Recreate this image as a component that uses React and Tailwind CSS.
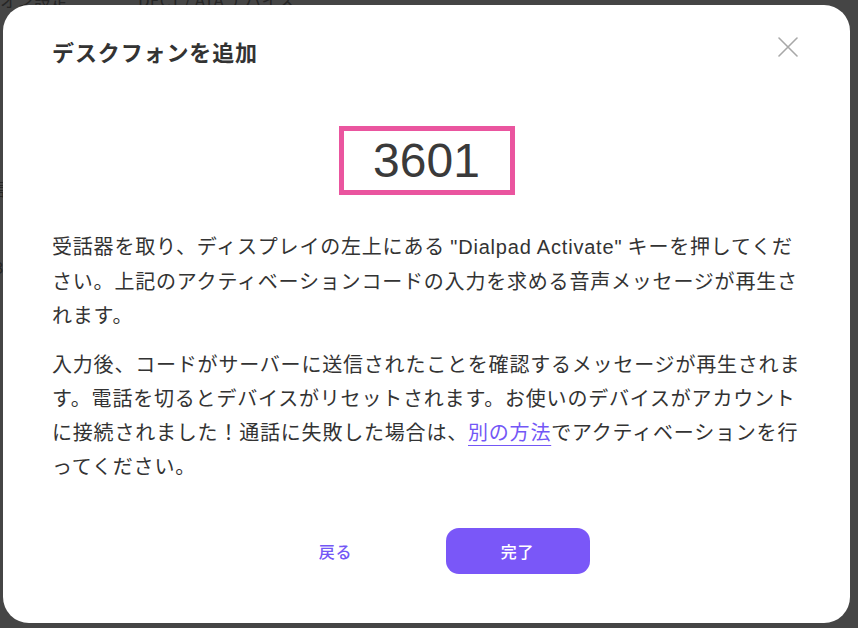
import React from "react";

const jp = { fontFamily: '"Noto Sans CJK JP", "Noto Sans", sans-serif' };

function CloseIcon() {
  return (
    <svg width="20" height="20" viewBox="0 0 20 20" fill="none">
      <path d="M1 1L19 19M19 1L1 19" stroke="#a8a8a8" strokeWidth="1.6" strokeLinecap="round" />
    </svg>
  );
}

export default function App() {
  return (
    <div className="relative h-[628px] w-[858px] overflow-hidden bg-[#454545]" style={jp}>
      {/* page behind the overlay */}
      <div className="flex gap-[60px] text-[17px] leading-none text-[#262626] -mt-[9px] pl-0">
        <span>オン設定</span>
        <span className="ml-[10px]">DECT / ATA デバイス</span>
      </div>
      <div className="absolute left-[-10px] top-[176px] text-[17px] text-[#262626]">言</div>
      <div className="absolute left-[-6px] top-[254px] text-[17px] text-[#262626]">3</div>

      {/* modal */}
      <div className="absolute left-[3px] top-[5px] flex h-[618px] w-[847px] flex-col rounded-[26px] bg-white px-[49px] pt-[31px] pb-[49px]">
        <button className="absolute right-[52px] top-[32px] flex h-[20px] w-[20px] items-center justify-center">
          <CloseIcon />
        </button>
        <h2 className="h-[30px] text-[22px] font-bold leading-[30px] tracking-[0.04em] text-[#333333]">
          デスクフォンを追加
        </h2>
        <div className="mt-[24px] h-px w-full bg-[#d6d6d6]" />
        <div className="mt-[36px] flex justify-center">
          <div className="flex h-[69px] w-[176px] items-center justify-center border-[5px] border-[#ea559f]">
            <span
              className="text-[48px] leading-none text-[#3a3a3a]"
              style={{ fontFamily: '"Liberation Sans", Arial, sans-serif' }}
            >
              3601
            </span>
          </div>
        </div>
        <div className="mt-[34px] text-[20px] leading-[34px] tracking-[0.04em] text-[#333333]">
          <p>
            受話器を取り、ディスプレイの左上にある{" "}
            <span style={{ fontFamily: '"Liberation Sans", Arial, sans-serif' }}>"Dialpad Activate"</span>{" "}
            キーを押してください。上記のアクティベーションコードの入力を求める音声メッセージが再生されます。
          </p>
          <p className="mt-[15px]">
            入力後、コードがサーバーに送信されたことを確認するメッセージが再生されます。電話を切るとデバイスがリセットされます。お使いのデバイスがアカウントに接続されました！通話に失敗した場合は、
            <a className="text-[#7357f6] underline decoration-1 underline-offset-[5px]">別の方法</a>
            でアクティベーションを行ってください。
          </p>
        </div>
        <div className="mt-[45px] flex justify-center gap-[38px]">
          <button className="flex h-[46px] w-[144px] items-center justify-center text-[16px] font-medium tracking-[0.04em] text-[#7357f6]">
            戻る
          </button>
          <button className="flex h-[46px] w-[144px] items-center justify-center rounded-[13px] bg-[#7a57f8] text-[16px] font-medium tracking-[0.04em] text-white">
            完了
          </button>
        </div>
      </div>
    </div>
  );
}
